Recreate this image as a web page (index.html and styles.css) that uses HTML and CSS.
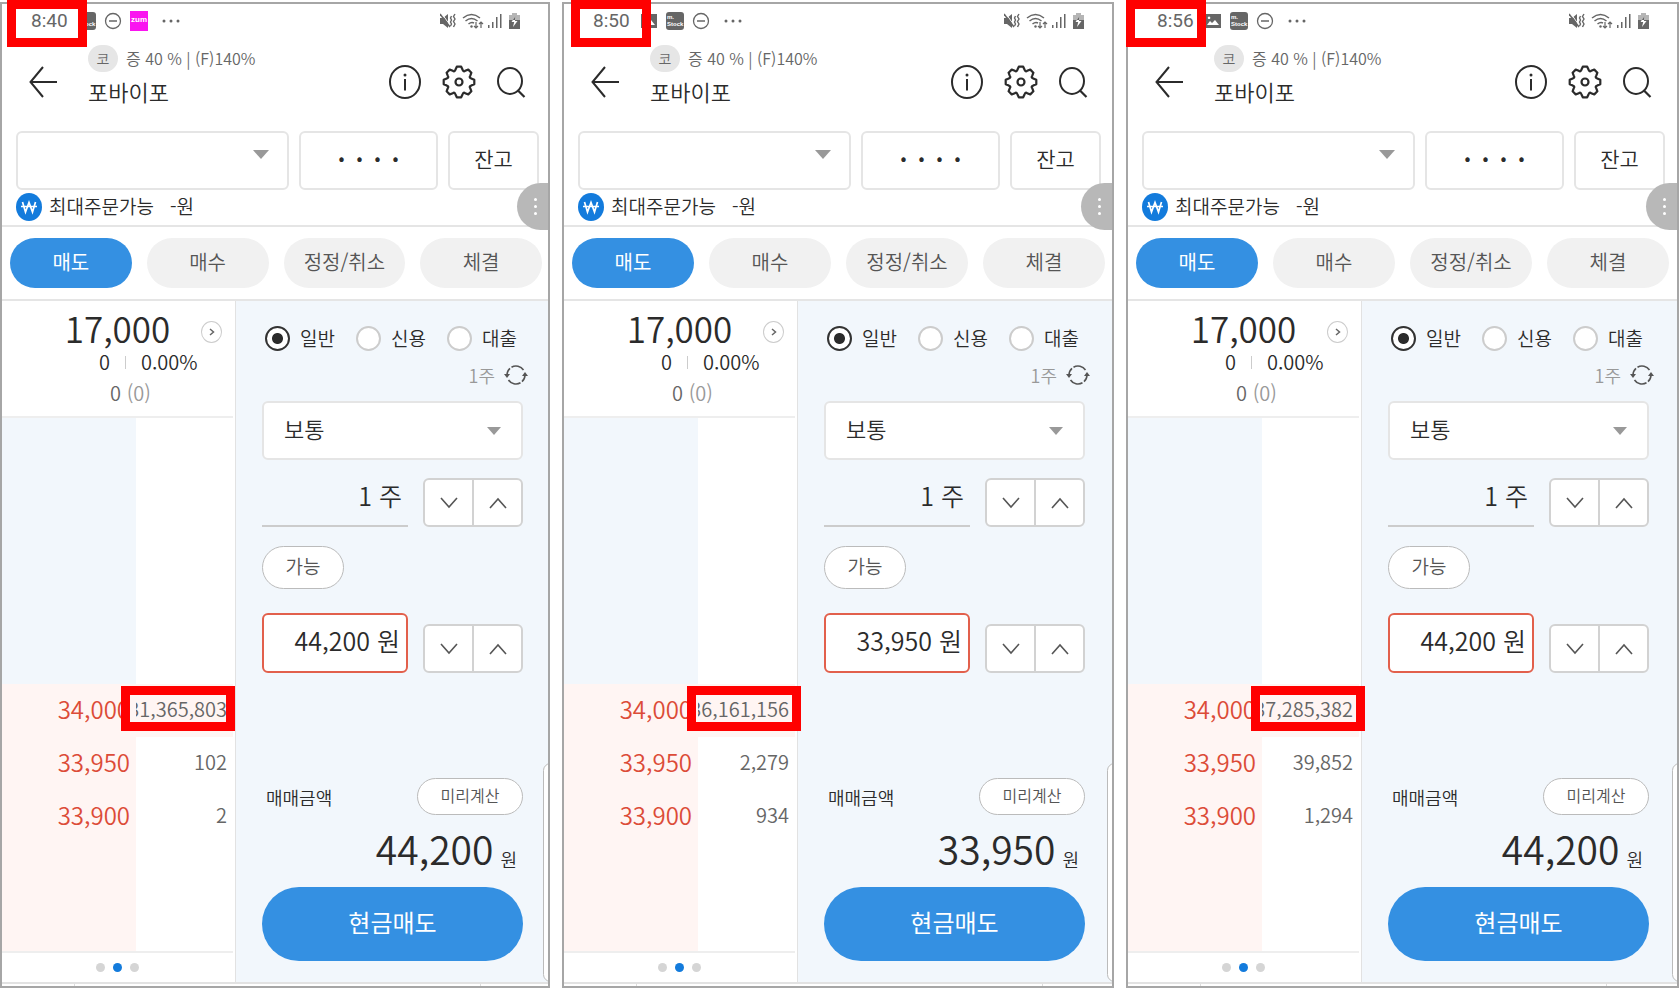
FILE: index.html
```html
<!DOCTYPE html>
<html lang="ko">
<head>
    <meta charset="UTF-8">
    <meta name="viewport" content="width=device-width, initial-scale=1.0">
    <title>포바이포 주문</title>
    <link rel="stylesheet" href="styles.css">
</head>
<body>

    <svg class="sprite" aria-hidden="true">
        <symbol id="i-picture" viewBox="0 0 18 18"><path fill="#666" fill-rule="evenodd" d="M1 2h16v14H1zM3 13h12l-4-5-3 3-2-2zM5 4.500a1.300 1.300 0 1 0 .1 0z"/></symbol>
        <symbol id="i-minus" viewBox="0 0 18 18"><circle cx="9" cy="9" r="7.500" fill="none" stroke="#666" stroke-width="1.300"/><path d="M5 9h8" stroke="#666" stroke-width="1.500"/></symbol>
        <symbol id="i-mute" viewBox="0 0 16 16"><path fill="#666" d="M0 5h3l5-4v14l-5-4H0z"/><path d="M1.500 0l9 13" stroke="#fff" stroke-width="1"/><path d="M0 1l10 13" stroke="#666" stroke-width="1.500"/><path d="M11.500 3l-1 2 1 2-1 2 1 2-1 2M15 1l-1.500 2.500 1.500 2.500-1.500 2.500 1.500 2.500-1.500 3" fill="none" stroke="#666" stroke-width="1.400"/></symbol>
        <symbol id="i-wifi" viewBox="0 0 22 16"><g fill="none" stroke="#666" stroke-width="1.500"><path d="M1 5q8.500-7 17 0M3.500 8q6-5 12 0M6.500 11q3-2.500 5.500-1"/><path d="M14 9v6m-2-2l2 2 2-2M19 15V9m-2 2l2-2 2 2" stroke-width="1.200"/></g><circle cx="9.500" cy="13.500" r="1.200" fill="#666"/></symbol>
        <symbol id="i-signal" viewBox="0 0 14 16"><path fill="#666" d="M0 12h1.500v3H0zM4 9h1.500v6H4zM8 4h1.500v11H8zM12 1h1.500v14H12z"/></symbol>
        <symbol id="i-battery" viewBox="0 0 11 16"><path fill="#b5b5b5" d="M3 0h5v2h3v5H0V2h3z"/><path fill="#666" d="M0 7h11v9H0z"/><path fill="#fff" d="M6.500 3L2.500 9h2.700L4 14l4.500-6H6z"/><path fill="#666" d="M6.500 3L3.800 7h4.900H6z"/></symbol>
        <symbol id="i-back" viewBox="0 0 28 32"><path d="M14 1L1.500 16 14 31M1.500 16H28" fill="none" stroke="#2b2b2b" stroke-width="2"/></symbol>
        <symbol id="i-info" viewBox="0 0 34 34"><ellipse cx="17" cy="17" rx="15" ry="16" fill="none" stroke="#2b2b2b" stroke-width="2"/><circle cx="17" cy="10" r="1.500" fill="#2b2b2b"/><path d="M17 14v11.500" stroke="#2b2b2b" stroke-width="2"/></symbol>
        <symbol id="i-gear" viewBox="-17 -17 34 34"><path d="M-3.600-12.200L-2.200-15.300H2.200L3.600-12.200Q4.500-9.800 6.100-11.200L9.300-12.400L12.400-9.300L11.200-6.100Q9.800-4.500 12.200-3.600L15.300-2.200V2.200L12.200 3.600Q9.800 4.500 11.200 6.100L12.400 9.300L9.300 12.400L6.100 11.200Q4.500 9.800 3.600 12.200L2.200 15.300H-2.200L-3.600 12.200Q-4.500 9.800-6.100 11.200L-9.300 12.400L-12.400 9.300L-11.200 6.100Q-9.800 4.500-12.200 3.600L-15.300 2.200V-2.200L-12.200-3.600Q-9.800-4.500-11.200-6.100L-12.400-9.300L-9.300-12.400L-6.100-11.200Q-4.500-9.800-3.600-12.200Z" fill="none" stroke="#2b2b2b" stroke-width="2.200" stroke-linejoin="round"/><circle r="3.500" fill="none" stroke="#2b2b2b" stroke-width="2.200"/></symbol>
        <symbol id="i-search" viewBox="0 0 30 32"><ellipse cx="14" cy="15" rx="12" ry="13" fill="none" stroke="#2b2b2b" stroke-width="2"/><path d="M21.500 24l7 7" stroke="#2b2b2b" stroke-width="2.200"/></symbol>
        <symbol id="i-won" viewBox="0 0 26 28"><ellipse cx="13" cy="14" rx="13" ry="14" fill="#137bdc"/><path d="M6.500 9l3 10L13 9.500 16.500 19l3-10M5 13.500h16" fill="none" stroke="#fff" stroke-width="1.700"/></symbol>
        <symbol id="i-refresh" viewBox="0 0 24 22"><path d="M3 11A9 9 0 0 1 6 4.300M7.500 3.200A9 9 0 0 1 19.500 6M21 11A9 9 0 0 1 18 17.700M16.500 18.800A9 9 0 0 1 4.500 16" fill="none" stroke="#555" stroke-width="1.600"/><path d="M0 10h6l-3 4zM18 12h6l-3-4z" fill="#555"/></symbol>
        <symbol id="i-down" viewBox="0 0 18 12"><path d="M1 1l8 9 8-9" fill="none" stroke="#555" stroke-width="1.600"/></symbol>
        <symbol id="i-up" viewBox="0 0 18 12"><path d="M1 11l8-9 8 9" fill="none" stroke="#555" stroke-width="1.600"/></symbol>
        <symbol id="i-caret" viewBox="0 0 16 9"><path d="M0 0h16L8 9z" fill="#999"/></symbol>
        <symbol id="i-more" viewBox="0 0 20 4"><g fill="#666"><circle cx="3" cy="2" r="1.500"/><circle cx="10" cy="2" r="1.500"/><circle cx="17" cy="2" r="1.500"/></g></symbol>
        <symbol id="i-next" viewBox="0 0 6 8"><path d="M1 1l3.500 3L1 7" fill="none" stroke="#666" stroke-width="1.500"/></symbol>
    </svg>

    <main id="phones" class="phones"></main>

    <script>
        var screens = [
            { time: "8:40", apps: ["stock", "minus", "zum"], price: "44,200", volumes: ["31,365,803", "102", "2"] },
            { time: "8:50", apps: ["picture", "stock", "minus"], price: "33,950", volumes: ["36,161,156", "2,279", "934"] },
            { time: "8:56", apps: ["picture", "stock", "minus"], price: "44,200", volumes: ["37,285,382", "39,852", "1,294"] }
        ];
        var levels = ["34,000", "33,950", "33,900"];

        function icon(name, cls) {
            return '<svg class="icon ' + (cls || name) + '" aria-hidden="true"><use href="#i-' + name + '"/></svg>';
        }

        function appIcon(name) {
            if (name === "stock") return '<span class="app stock">m.<br>Stock</span>';
            if (name === "zum") return '<span class="app zum">zum</span>';
            return icon(name, "app");
        }

        function stepper() {
            return '<div class="stepper">' +
                '<button aria-label="감소">' + icon("down", "step") + '</button>' +
                '<button aria-label="증가">' + icon("up", "step") + '</button></div>';
        }

        function radio(n, text, checked) {
            return '<label class="radio"><input type="radio" name="kind' + n + '"' + (checked ? " checked" : "") + '>' + text + '</label>';
        }

        function phone(s, n) {
            var rows = levels.map(function (level, i) {
                return '<tr class="bid"><td class="level">' + level + '</td><td class="volume"><div>' + s.volumes[i] + '</div></td></tr>';
            }).join("");

            return `
            <section class="phone phone-${n}">
                <div class="status">
                    <span class="time">${s.time}</span>
                    ${s.apps.map(appIcon).join("")}
                    ${icon("more")}
                    <span class="spacer"></span>
                    ${icon("mute")}${icon("wifi")}${icon("signal")}${icon("battery")}
                </div>
                <header class="head">
                    <button aria-label="뒤로">${icon("back")}</button>
                    <div class="stock-info">
                        <div class="meta"><span class="market">코</span>증 40 % | (F)140%</div>
                        <h1>포바이포</h1>
                    </div>
                    <div class="tools">
                        <button aria-label="정보">${icon("info")}</button>
                        <button aria-label="설정">${icon("gear")}</button>
                        <button aria-label="검색">${icon("search")}</button>
                    </div>
                </header>
                <div class="account">
                    <div class="picker account-picker">
                        <select aria-label="계좌"><option></option></select>
                        ${icon("caret")}
                    </div>
                    <input class="pin" type="text" aria-label="비밀번호" value="•   •   •   •">
                    <button class="balance">잔고</button>
                </div>
                <div class="limit">
                    ${icon("won")}<span>최대주문가능</span><span>-원</span>
                    <button class="float" aria-label="메뉴"><i></i><i></i><i></i></button>
                </div>
                <nav class="tabs">
                    <button class="active">매도</button>
                    <button>매수</button>
                    <button>정정/취소</button>
                    <button>체결</button>
                </nav>
                <div class="trade">
                    <div class="quotes">
                        <div class="summary">
                            <button class="next" aria-label="다음">${icon("next", "chevron")}</button>
                            <div class="last">17,000</div>
                            <div class="change"><span>0</span><i></i><span>0.00%</span></div>
                            <div class="count">0 <span>(0)</span></div>
                        </div>
                        <table class="book">
                            <tr class="asks"><td class="level"></td><td></td></tr>
                            ${rows}
                            <tr class="rest"><td class="level"></td><td></td></tr>
                        </table>
                        <div class="pager"><i></i><i class="on"></i><i></i></div>
                    </div>
                    <div class="order">
                        <div class="kinds">${radio(n, "일반", true)}${radio(n, "신용")}${radio(n, "대출")}</div>
                        <div class="unit">1주<button aria-label="새로고침">${icon("refresh")}</button></div>
                        <div class="picker type-picker">
                            <select aria-label="주문유형"><option>보통</option></select>
                            ${icon("caret")}
                        </div>
                        <div class="field-row">
                            <input class="qty" type="text" aria-label="수량" value="1 주">
                            ${stepper()}
                        </div>
                        <button class="pill able">가능</button>
                        <div class="field-row price-row">
                            <input class="price" type="text" aria-label="가격" value="${s.price} 원">
                            ${stepper()}
                        </div>
                        <div class="amount"><span>매매금액</span><button class="pill calc">미리계산</button></div>
                        <div class="total">${s.price}<span>원</span></div>
                        <button class="sell">현금매도</button>
                        <div class="drawer"></div>
                    </div>
                </div>
                <footer class="bottom"><i></i><i></i><i></i></footer>
                <div class="mark mark-time"></div>
                <div class="mark mark-volume"></div>
            </section>`;
        }

        document.getElementById("phones").innerHTML = screens.map(function (s, i) {
            return phone(s, i + 1);
        }).join("");
    </script>

</body>
</html>
```
FILE: styles.css
```css
* {
    box-sizing: border-box;
}

body {
    margin: 0;
    background: #fff;
    color: #2b2b2b;
    font-family: "Noto Sans CJK KR", "Noto Sans", sans-serif;
    font-weight: 350;
}

button, input, select {
    font: inherit;
    color: inherit;
    margin: 0;
    padding: 0;
    border: 0;
    background: none;
}

button {
    display: flex;
    align-items: center;
    justify-content: center;
}

.sprite {
    position: absolute;
    width: 0;
    height: 0;
}

.icon {
    display: block;
    flex: none;
}

.phones {
    display: grid;
    grid-template-columns: 550fr 552fr 553fr;
    gap: 12px;
    padding-top: 2px;
    min-height: 100vh;
}

.phone {
    position: relative;
    display: flex;
    flex-direction: column;
    min-width: 0;
    border: 2px solid #a6a6a6;
}

/* status bar */
.status {
    display: flex;
    align-items: center;
    gap: 8px;
    height: 33px;
    padding: 0 28px 0 29px;
    color: #666;
}

.time {
    width: 39px;
    font-family: Roboto, sans-serif;
    font-size: 19px;
    font-weight: 400;
}

.app {
    width: 18px;
    height: 18px;
    flex: none;
}

.stock {
    padding: 2px 1px;
    border-radius: 3px;
    background: #666;
    color: #fff;
    font: 700 6px/7px "Liberation Sans", sans-serif;
}

.zum {
    height: 20px;
    background: #fa14f0;
    color: #fff;
    font: 700 8px/18px "Liberation Sans", sans-serif;
    text-align: center;
}

.more {
    width: 20px;
    height: 4px;
    margin-left: 5px;
}

.spacer {
    flex: 1;
}

.mute {
    width: 16px;
    height: 16px;
}

.wifi {
    width: 22px;
    height: 16px;
    margin-left: -2px;
}

.signal {
    width: 14px;
    height: 16px;
    margin-left: -4px;
}

.battery {
    width: 11px;
    height: 16px;
    margin-left: -1px;
}

/* header */
.head {
    display: flex;
    align-items: center;
    height: 89px;
    padding-left: 27px;
}

.back {
    width: 28px;
    height: 32px;
}

.stock-info {
    width: 300px;
    margin-left: 31px;
    padding-bottom: 12px;
}

.meta {
    display: flex;
    align-items: center;
    gap: 8px;
    height: 27px;
    color: #666;
    font-size: 16px;
    line-height: 25px;
}

.market {
    width: 30px;
    border-radius: 14px;
    background: #e6e6e6;
    font-size: 14px;
    line-height: 27px;
    text-align: center;
}

h1 {
    margin: 3px 0 0;
    font-size: 22px;
    font-weight: 350;
    line-height: 32px;
}

.tools {
    display: flex;
    align-items: center;
    gap: 20px;
}

.info, .gear {
    width: 34px;
    height: 34px;
}

.search {
    width: 30px;
    height: 32px;
}

/* account row */
.account {
    display: flex;
    gap: 10px;
    height: 59px;
    margin: 5px 8px 0 14px;
}

.picker, .pin, .balance {
    border: 2px solid #e5e5e5;
    border-radius: 6px;
    background: #fff;
}

.picker {
    position: relative;
}

.picker select {
    width: 100%;
    height: 100%;
    appearance: none;
}

.caret {
    position: absolute;
    right: 18px;
    top: 17px;
    width: 16px;
    height: 9px;
    pointer-events: none;
}

.account-picker {
    width: 273px;
}

.pin {
    width: 139px;
    padding-bottom: 7px;
    font-size: 18px;
    text-align: center;
    white-space: pre;
}

.balance {
    width: 91px;
    padding-bottom: 5px;
    font-size: 21px;
}

.limit {
    position: relative;
    display: flex;
    align-items: center;
    height: 37px;
    padding: 0 14px 2px;
    border-bottom: 2px solid #e5e5e5;
    font-size: 19px;
}

.limit span {
    line-height: 26px;
    padding-bottom: 2px;
}

.won {
    width: 26px;
    height: 28px;
    margin-right: 7px;
}

.limit span + span {
    margin-left: 16px;
}

.float {
    position: absolute;
    right: 0;
    top: -7px;
    flex-direction: column;
    gap: 4px;
    width: 31px;
    height: 47px;
    padding-left: 6px;
    border-radius: 24px 0 0 24px;
    background: #b8b8b8;
}

.float i {
    width: 3px;
    height: 3px;
    border-radius: 50%;
    background: #fff;
}

/* tabs */
.tabs {
    display: flex;
    gap: 15px;
    padding: 11px 6px 11px 8px;
    border-bottom: 2px solid #e5e5e5;
}

.tabs button {
    width: 122px;
    height: 50px;
    padding-bottom: 3px;
    border-radius: 25px;
    background: #f1f1f1;
    color: #555;
    font-size: 20px;
}

.tabs .active {
    background: #3490e2;
    color: #fff;
    font-weight: 400;
}

.trade {
    display: flex;
    flex: 1;
}

/* quotes */
.quotes {
    display: flex;
    flex-direction: column;
    width: 234px;
    padding-right: 2px;
    border-right: 1px solid #e2e2e2;
}

.summary {
    position: relative;
    height: 117px;
    padding-top: 6px;
    border-bottom: 2px solid #eee;
    text-align: center;
}

.next {
    position: absolute;
    top: 20px;
    right: 11px;
    width: 21px;
    height: 22px;
    border: 1px solid #ccc;
    border-radius: 50%;
}

.chevron {
    width: 6px;
    height: 8px;
}

.last {
    font-size: 35px;
    line-height: 41px;
}

.change {
    display: flex;
    align-items: center;
    gap: 15px;
    padding-left: 97px;
    font-size: 20px;
    line-height: 28px;
}

.change i {
    width: 1px;
    height: 13px;
    background: #ccc;
}

.count {
    padding-left: 26px;
    color: #666;
    font-size: 20px;
    line-height: 34px;
}

.count span {
    color: #999;
}

.book {
    width: 100%;
    flex: 1;
    border-collapse: collapse;
    table-layout: fixed;
}

.book td {
    padding: 0;
}

.book .level {
    width: 134px;
    padding: 0 6px 4px 0;
    background: #fff5f3;
    color: #dc4b37;
    font-size: 24px;
    line-height: 49px;
    text-align: right;
}

.asks {
    height: 266px;
}

.asks .level {
    background: #f2f7fc;
}

.bid {
    height: 53px;
}

.asks + .bid .volume {
    background: #fff5f3;
}

.volume div {
    display: flex;
    justify-content: flex-end;
    overflow: hidden;
    padding: 0 6px 4px 0;
    color: #666;
    font-size: 20px;
    line-height: 49px;
}

.rest {
    height: 108px;
}

.pager {
    display: flex;
    align-items: center;
    justify-content: center;
    gap: 8px;
    height: 31px;
    border-top: 2px solid #eee;
}

.pager i {
    width: 9px;
    height: 9px;
    border-radius: 50%;
    background: #d5d5d5;
}

.pager .on {
    background: #137bdc;
}

/* order form */
.order {
    position: relative;
    display: flex;
    flex-direction: column;
    flex: 1;
    padding: 25px 26px 21px;
    overflow: hidden;
    background: #f2f7fc;
}

.order > * {
    width: 261px;
}

.kinds {
    display: flex;
    margin-left: 3px;
}

.radio {
    display: flex;
    align-items: center;
    gap: 10px;
    flex: none;
    width: 91px;
    height: 24px;
    font-size: 19px;
    line-height: 24px;
}

.radio input {
    width: 25px;
    height: 25px;
    border: 2px solid #ccc;
    border-radius: 50%;
    background: #fff;
    appearance: none;
}

.radio input:checked {
    border-color: #333;
    background: radial-gradient(circle, #2b2b2b 5px, #fff 6px);
}

.order .unit {
    display: flex;
    align-items: center;
    justify-content: flex-end;
    gap: 9px;
    width: 266px;
    height: 24px;
    margin-top: 13px;
    color: #999;
    font-size: 18px;
}

.refresh {
    width: 24px;
    height: 22px;
}

.type-picker {
    height: 59px;
    margin-top: 14px;
    font-size: 22px;
}

.type-picker select {
    padding: 0 0 6px 20px;
}

.type-picker .caret {
    right: 20px;
    top: 24px;
    width: 14px;
    height: 8px;
}

.field-row {
    display: flex;
    align-items: flex-end;
    justify-content: space-between;
    margin-top: 18px;
}

.field-row input {
    width: 146px;
    padding: 0 6px 6px 0;
    font-size: 25px;
    text-align: right;
}

.field-row .qty {
    height: 49px;
    padding-bottom: 14px;
    border-bottom: 2px solid #ccc;
}

.field-row .price {
    height: 60px;
    border: 2px solid #e2604c;
    border-radius: 6px;
    background: #fff;
}

.stepper {
    display: flex;
    width: 100px;
    height: 49px;
    border: 2px solid #d2d2d2;
    border-radius: 6px;
    background: #fff;
}

.stepper button {
    flex: 1;
}

.stepper button + button {
    border-left: 2px solid #d2d2d2;
}

.step {
    width: 18px;
    height: 12px;
}

.pill {
    border: 1px solid #bbb;
    border-radius: 22px;
    background: #fff;
    color: #555;
}

.order .able {
    width: 82px;
    height: 43px;
    margin-top: 19px;
    padding-bottom: 4px;
    font-size: 19px;
}

.price-row {
    margin-top: 24px;
}

.amount {
    display: flex;
    align-items: center;
    justify-content: space-between;
    margin-top: auto;
    padding-left: 4px;
    font-size: 18px;
}

.calc {
    width: 106px;
    height: 37px;
    padding-bottom: 3px;
    font-size: 16px;
}

.total {
    display: flex;
    align-items: flex-end;
    justify-content: flex-end;
    gap: 7px;
    height: 56px;
    margin: 5px 0 11px;
    padding-right: 6px;
    font-size: 39px;
    line-height: 56px;
}

.total span {
    font-size: 18px;
    line-height: 34px;
}

.sell {
    height: 74px;
    padding-bottom: 5px;
    border-radius: 37px;
    background: #3490e2;
    color: #fff;
    font-size: 24px;
    font-weight: 400;
}

.order .drawer {
    position: absolute;
    right: -10px;
    bottom: 0;
    width: 15px;
    height: 219px;
    border: 1px solid #bbb;
    border-radius: 8px;
    background: #fff;
}

.bottom {
    display: grid;
    grid-template-columns: 72px 406px 1fr;
    height: 4px;
    border-top: 2px solid #e2e2e2;
}

.bottom i + i {
    border-left: 1px solid #ddd;
}

/* red highlight frames */
.mark {
    position: absolute;
    border: 9px solid #f00;
    pointer-events: none;
}

.mark-time {
    left: 5px;
    top: -4px;
    width: 80px;
    height: 47px;
}

.mark-volume {
    left: 123px;
    top: 682px;
    width: 114px;
    height: 45px;
}

.phone-1 .mark-volume {
    left: 119px;
}

.phone-2 .mark-time {
    left: 7px;
}

.phone-3 .mark-time {
    left: -2px;
}
```
